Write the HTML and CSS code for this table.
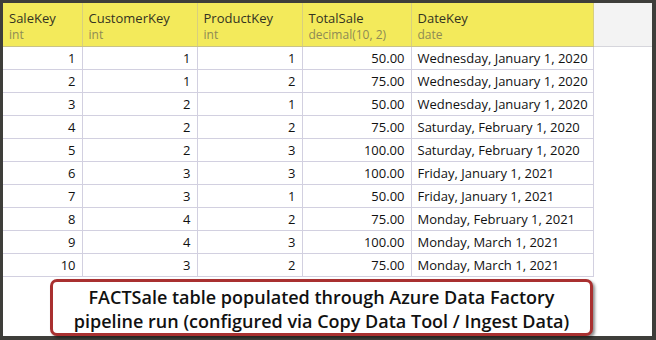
FILE: index.html
```html
<!DOCTYPE html>
<html>
<head>
<meta charset="utf-8">
<link rel="stylesheet" href="styles.css">
</head>
<body>
<div class="frame">
  <table class="grid">
    <thead>
      <tr>
        <th class="c1"><div class="name">SaleKey</div><div class="type">int</div></th>
        <th class="c2"><div class="name">CustomerKey</div><div class="type">int</div></th>
        <th class="c3"><div class="name">ProductKey</div><div class="type">int</div></th>
        <th class="c4"><div class="name">TotalSale</div><div class="type">decimal(10, 2)</div></th>
        <th class="c5"><div class="name">DateKey</div><div class="type">date</div></th>
        <th class="fill"></th>
      </tr>
    </thead>
    <tbody>
      <tr><td class="num">1</td><td class="num">1</td><td class="num">1</td><td class="num">50.00</td><td>Wednesday, January 1, 2020</td><td class="blank"></td></tr>
      <tr><td class="num">2</td><td class="num">1</td><td class="num">2</td><td class="num">75.00</td><td>Wednesday, January 1, 2020</td><td class="blank"></td></tr>
      <tr><td class="num">3</td><td class="num">2</td><td class="num">1</td><td class="num">50.00</td><td>Wednesday, January 1, 2020</td><td class="blank"></td></tr>
      <tr><td class="num">4</td><td class="num">2</td><td class="num">2</td><td class="num">75.00</td><td>Saturday, February 1, 2020</td><td class="blank"></td></tr>
      <tr><td class="num">5</td><td class="num">2</td><td class="num">3</td><td class="num">100.00</td><td>Saturday, February 1, 2020</td><td class="blank"></td></tr>
      <tr><td class="num">6</td><td class="num">3</td><td class="num">3</td><td class="num">100.00</td><td>Friday, January 1, 2021</td><td class="blank"></td></tr>
      <tr><td class="num">7</td><td class="num">3</td><td class="num">1</td><td class="num">50.00</td><td>Friday, January 1, 2021</td><td class="blank"></td></tr>
      <tr><td class="num">8</td><td class="num">4</td><td class="num">2</td><td class="num">75.00</td><td>Monday, February 1, 2021</td><td class="blank"></td></tr>
      <tr><td class="num">9</td><td class="num">4</td><td class="num">3</td><td class="num">100.00</td><td>Monday, March 1, 2021</td><td class="blank"></td></tr>
      <tr><td class="num">10</td><td class="num">3</td><td class="num">2</td><td class="num">75.00</td><td>Monday, March 1, 2021</td><td class="blank"></td></tr>
    </tbody>
  </table>
  <div class="callout">FACTSale table populated through Azure Data Factory<br>pipeline run (configured via Copy Data Tool / Ingest Data)</div>
</div>
</body>
</html>
```
FILE: styles.css
```css
html, body {
  margin: 0;
  padding: 0;
}
body {
  background: #3e3e3a;
  width: 656px;
  height: 340px;
  overflow: hidden;
}
.frame {
  margin: 3px 4px 0 3px;
  width: 649px;
  height: 333px;
  background: #ffffff;
  display: flex;
  flex-direction: column;
}
.grid {
  border-collapse: collapse;
  table-layout: fixed;
  width: 649px;
  font-family: "Open Sans", "Noto Sans", sans-serif;
  font-size: 13px;
  color: #111111;
}
.grid th {
  background: #f3ea5b;
  text-align: left;
  font-weight: normal;
  vertical-align: top;
  padding: 6px 6px 0 6px;
  height: 43px;
  box-sizing: border-box;
  border-right: 1px solid #d8cf7e;
  border-bottom: 1px solid #c9c387;
}
.grid th.fill {
  background: #f3f3f3;
  border-right: none;
  border-bottom: 1px solid #d6d6dc;
}
.c1 { width: 79px; }
.c2 { width: 115px; }
.c3 { width: 105px; }
.c4 { width: 109px; }
.c5 { width: 182px; }
.name {
  color: #333322;
  line-height: 18px;
  font-size: 13px;
}
.type {
  color: #8e8a55;
  font-size: 12px;
  line-height: 16px;
}
.grid td {
  height: 23px;
  box-sizing: border-box;
  padding: 0 6px;
  border-right: 1px solid #d2d0e0;
  border-bottom: 1px solid #d2d0e0;
  white-space: nowrap;
  line-height: 22px;
}
.grid td.num {
  text-align: right;
}
.grid td.blank {
  border: none;
}
.callout {
  margin: 2px 0 0 47px;
  width: 543px;
  height: 57px;
  box-sizing: border-box;
  border: 3px solid #a93030;
  border-radius: 7px;
  background: #ffffff;
  box-shadow: 2px 2px 3px rgba(0,0,0,0.45);
  font-family: "Open Sans", "Noto Sans", sans-serif;
  font-weight: 600;
  font-size: 18px;
  line-height: 24px;
  text-align: center;
  color: #111111;
  padding-top: 3px;
}
```
